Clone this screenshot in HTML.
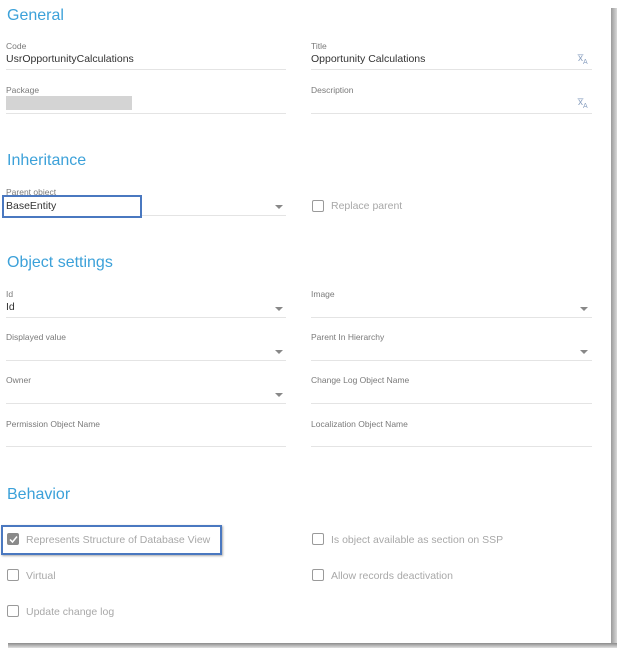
<!DOCTYPE html>
<html><head><style>
*{margin:0;padding:0;box-sizing:border-box}
body{width:624px;height:656px;background:#fff;position:relative;overflow:hidden;font-family:"Liberation Sans",sans-serif}
.a{position:absolute;white-space:nowrap}
.h{font-size:16px;color:#3ca1d9;left:7px}
.l{font-size:8.5px;color:#7a7a7a}
.v{font-size:10.5px;color:#333}
.ln{position:absolute;height:1px;background:#e4e4e4}
.cb{position:absolute;width:12px;height:12px;border:1.5px solid #9a9a9a;border-radius:2px;background:#fff}
.ct{font-size:10.5px;color:#a8a8a8}
.ar{position:absolute;width:0;height:0;border-left:4px solid transparent;border-right:4px solid transparent;border-top:4px solid #888}
.xa{font-size:10px;color:#8aa0c0}
</style></head><body>
<div class="a" style="left:611px;top:8px;width:6px;height:640px;background:linear-gradient(to right,#9a9a9a,#d8d8d8)"></div>
<div class="a" style="left:8px;top:643px;width:609px;height:5px;background:linear-gradient(to bottom,#8a8a8a,#e0e0e0)"></div>

<div class="a h" style="top:7px">General</div>
<div class="a l" style="left:6px;top:41px">Code</div>
<div class="a v" style="left:6px;top:53px">UsrOpportunityCalculations</div>
<div class="ln" style="left:6px;top:69px;width:280px"></div>
<div class="a l" style="left:311px;top:41px">Title</div>
<div class="a v" style="left:311px;top:53px">Opportunity Calculations</div>
<div class="a xa" style="left:578px;top:53px">x̅<sub style="font-size:7px">A</sub></div>
<div class="ln" style="left:311px;top:69px;width:281px"></div>
<div class="a l" style="left:6px;top:85px">Package</div>
<div class="a" style="left:6px;top:96px;width:126px;height:14px;background:#d4d4d4"></div>
<div class="ln" style="left:6px;top:113px;width:280px"></div>
<div class="a l" style="left:311px;top:85px">Description</div>
<div class="a xa" style="left:578px;top:97px">x̅<sub style="font-size:7px">A</sub></div>
<div class="ln" style="left:311px;top:113px;width:281px"></div>

<div class="a h" style="top:152px">Inheritance</div>
<div class="a l" style="left:6px;top:187px">Parent object</div>
<div class="a" style="left:2px;top:195px;width:140px;height:23px;border:2px solid #4a78c0;background:#fff"></div>
<div class="a v" style="left:6px;top:200px">BaseEntity</div>
<div class="ln" style="left:142px;top:215px;width:144px"></div>
<div class="ar" style="left:275px;top:205px"></div>
<div class="cb" style="left:312px;top:200px"></div>
<div class="a ct" style="left:331px;top:200px">Replace parent</div>

<div class="a h" style="top:254px">Object settings</div>
<div class="a l" style="left:6px;top:289px">Id</div>
<div class="a v" style="left:6px;top:301px">Id</div>
<div class="ln" style="left:6px;top:317px;width:280px"></div>
<div class="ar" style="left:275px;top:307px"></div>
<div class="a l" style="left:311px;top:289px">Image</div>
<div class="ln" style="left:311px;top:317px;width:281px"></div>
<div class="ar" style="left:580px;top:307px"></div>
<div class="a l" style="left:6px;top:332px">Displayed value</div>
<div class="ln" style="left:6px;top:360px;width:280px"></div>
<div class="ar" style="left:275px;top:350px"></div>
<div class="a l" style="left:311px;top:332px">Parent In Hierarchy</div>
<div class="ln" style="left:311px;top:360px;width:281px"></div>
<div class="ar" style="left:580px;top:350px"></div>
<div class="a l" style="left:6px;top:375px">Owner</div>
<div class="ln" style="left:6px;top:403px;width:280px"></div>
<div class="ar" style="left:275px;top:393px"></div>
<div class="a l" style="left:311px;top:375px">Change Log Object Name</div>
<div class="ln" style="left:311px;top:403px;width:281px"></div>
<div class="a l" style="left:6px;top:419px">Permission Object Name</div>
<div class="ln" style="left:6px;top:446px;width:280px"></div>
<div class="a l" style="left:311px;top:419px">Localization Object Name</div>
<div class="ln" style="left:311px;top:446px;width:281px"></div>

<div class="a h" style="top:486px">Behavior</div>
<div class="a" style="left:1px;top:525px;width:221px;height:30px;border:2px solid #4a78c0;box-shadow:1px 1px 2px #aaa"></div>
<div class="cb" style="left:7px;top:533px;background:#8a8a8a;border-color:#8a8a8a"></div>
<svg class="a" style="left:8px;top:534px" width="11" height="11"><path d="M2 5.5 L4.5 8 L9 2.5" stroke="#fff" stroke-width="1.5" fill="none"/></svg>
<div class="a ct" style="left:26px;top:534px">Represents Structure of Database View</div>
<div class="cb" style="left:312px;top:533px"></div>
<div class="a ct" style="left:331px;top:534px">Is object available as section on SSP</div>
<div class="cb" style="left:7px;top:569px"></div>
<div class="a ct" style="left:26px;top:570px">Virtual</div>
<div class="cb" style="left:312px;top:569px"></div>
<div class="a ct" style="left:331px;top:570px">Allow records deactivation</div>
<div class="cb" style="left:7px;top:605px"></div>
<div class="a ct" style="left:26px;top:606px">Update change log</div>
</body></html>
